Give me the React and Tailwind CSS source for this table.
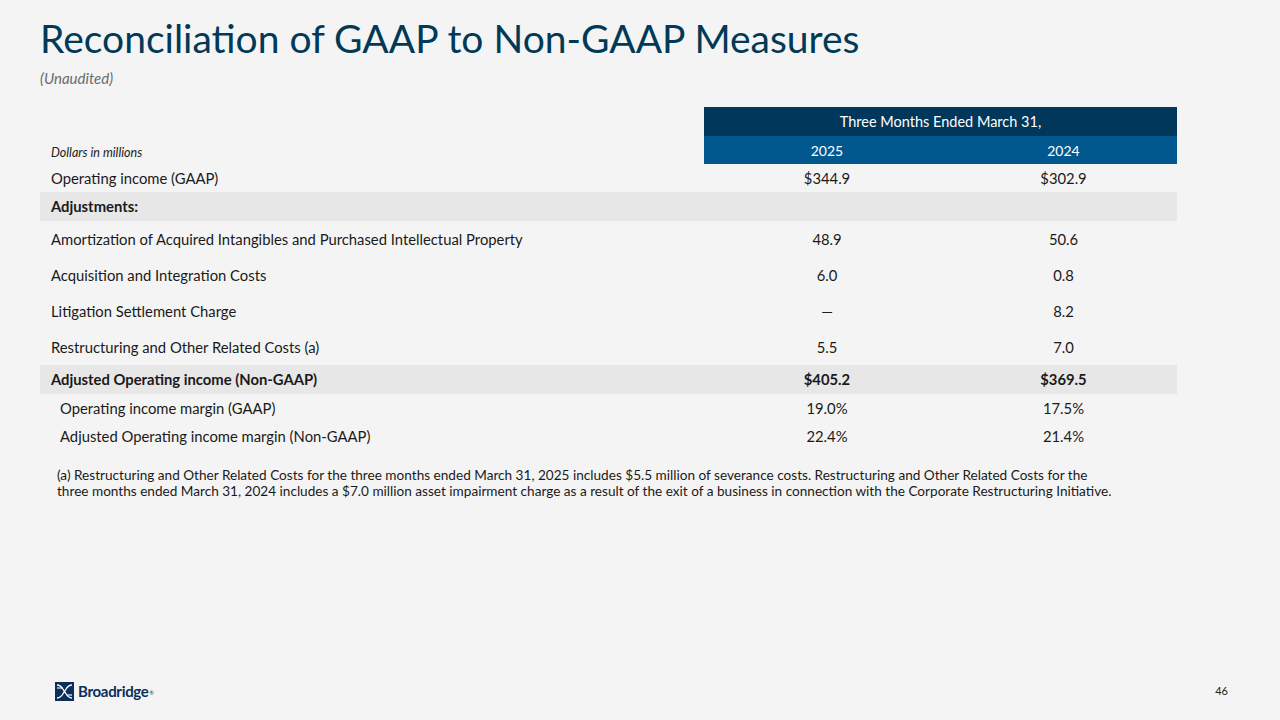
export default function App() {
  const rows = [
    { label: "Amortization of Acquired Intangibles and Purchased Intellectual Property", a: "48.9", b: "50.6" },
    { label: "Acquisition and Integration Costs", a: "6.0", b: "0.8" },
    { label: "Litigation Settlement Charge", a: "—", b: "8.2" },
    { label: "Restructuring and Other Related Costs (a)", a: "5.5", b: "7.0" },
  ];

  return (
    <div
      className="relative flex h-[720px] w-[1280px] flex-col overflow-hidden bg-[#f4f4f4] text-[#1a1a1a]"
      style={{ fontFamily: "Lato, 'Noto Sans', sans-serif" }}
    >
      {/* Title */}
      <div className="px-[40px] pt-[14px]">
        <h1 className="text-[39px] leading-[48px] text-[#003a57]">
          Reconciliation of GAAP to Non-GAAP Measures
        </h1>
        <p className="mt-[7px] text-[15px] italic leading-[18px] text-[#6b6b6b]">(Unaudited)</p>
      </div>

      {/* Table */}
      <div className="mt-[20px] ml-[40px] w-[1137px] text-[14.8px]">
        <div className="flex h-[29px]">
          <div className="w-[664px]" />
          <div className="flex flex-1 items-center justify-center bg-[#01375a] text-[14.5px] text-white">
            Three Months Ended March 31,
          </div>
        </div>
        <div className="flex h-[28px]">
          <div className="flex w-[664px] items-center pt-[7px] pl-[11px] text-[12.5px] italic text-[#222]">
            Dollars in millions
          </div>
          <div className="flex flex-1 bg-[#01588e] text-[14px] text-white">
            <div className="flex w-[246px] items-center justify-center">2025</div>
            <div className="flex flex-1 items-center justify-center">2024</div>
          </div>
        </div>

        <Row label="Operating income (GAAP)" a="$344.9" b="$302.9" h="h-[28px]" />
        <div className="flex h-[29px] items-center bg-[#e7e7e7] pl-[11px] font-bold">Adjustments:</div>
        {rows.map((r) => (
          <Row key={r.label} label={r.label} a={r.a} b={r.b} h="h-[36px]" />
        ))}
        <Row label="Adjusted Operating income (Non-GAAP)" a="$405.2" b="$369.5" h="h-[29px]" bold gray />
        <Row label="Operating income margin (GAAP)" a="19.0%" b="17.5%" h="h-[28px]" indent />
        <Row label="Adjusted Operating income margin (Non-GAAP)" a="22.4%" b="21.4%" h="h-[28px]" indent />
      </div>

      {/* Footnote */}
      <p className="mt-[17px] ml-[57px] w-[1100px] whitespace-nowrap text-[13.6px] leading-[16px] text-[#1a1a1a]">
        (a) Restructuring and Other Related Costs for the three months ended March 31, 2025 includes $5.5 million of severance costs. Restructuring and Other Related Costs for the
        <br />
        three months ended March 31, 2024 includes a $7.0 million asset impairment charge as a result of the exit of a business in connection with the Corporate Restructuring Initiative.
      </p>

      {/* Footer */}
      <div className="mt-auto flex items-center justify-between pb-[19px] pl-[55px] pr-[52px]">
        <div className="flex items-start gap-[4px]">
          <svg width="19" height="19" viewBox="0 0 19 19">
            <rect width="19" height="19" fill="#0b2f5b" />
            <path d="M2 3 C7 3 8 8 9.5 9.5 C11 8 12 3 17 3" stroke="#fff" strokeWidth="1.3" fill="none" />
            <path d="M2 16 C7 16 8 11 9.5 9.5 C11 11 12 16 17 16" stroke="#fff" strokeWidth="1.3" fill="none" />
            <path d="M2 6 L7 6" stroke="#fff" strokeWidth="1.1" />
            <path d="M12 13 L17 13" stroke="#fff" strokeWidth="1.1" />
          </svg>
          <span className="text-[15px] font-bold leading-[19px] tracking-[-0.3px] text-[#0b2f5b]">
            Broadridge<sup className="ml-[1px] text-[5px] font-normal">®</sup>
          </span>
        </div>
        <span className="text-[11px] text-[#222]">46</span>
      </div>
    </div>
  );
}

function Row({ label, a, b, h, bold, gray, indent }) {
  return (
    <div className={`flex ${h} items-center ${gray ? "bg-[#e7e7e7]" : ""} ${bold ? "font-bold" : ""}`}>
      <div className={`w-[664px] ${indent ? "pl-[20px]" : "pl-[11px]"}`}>{label}</div>
      <div className="w-[246px] text-center">{a}</div>
      <div className="flex-1 text-center">{b}</div>
    </div>
  );
}
